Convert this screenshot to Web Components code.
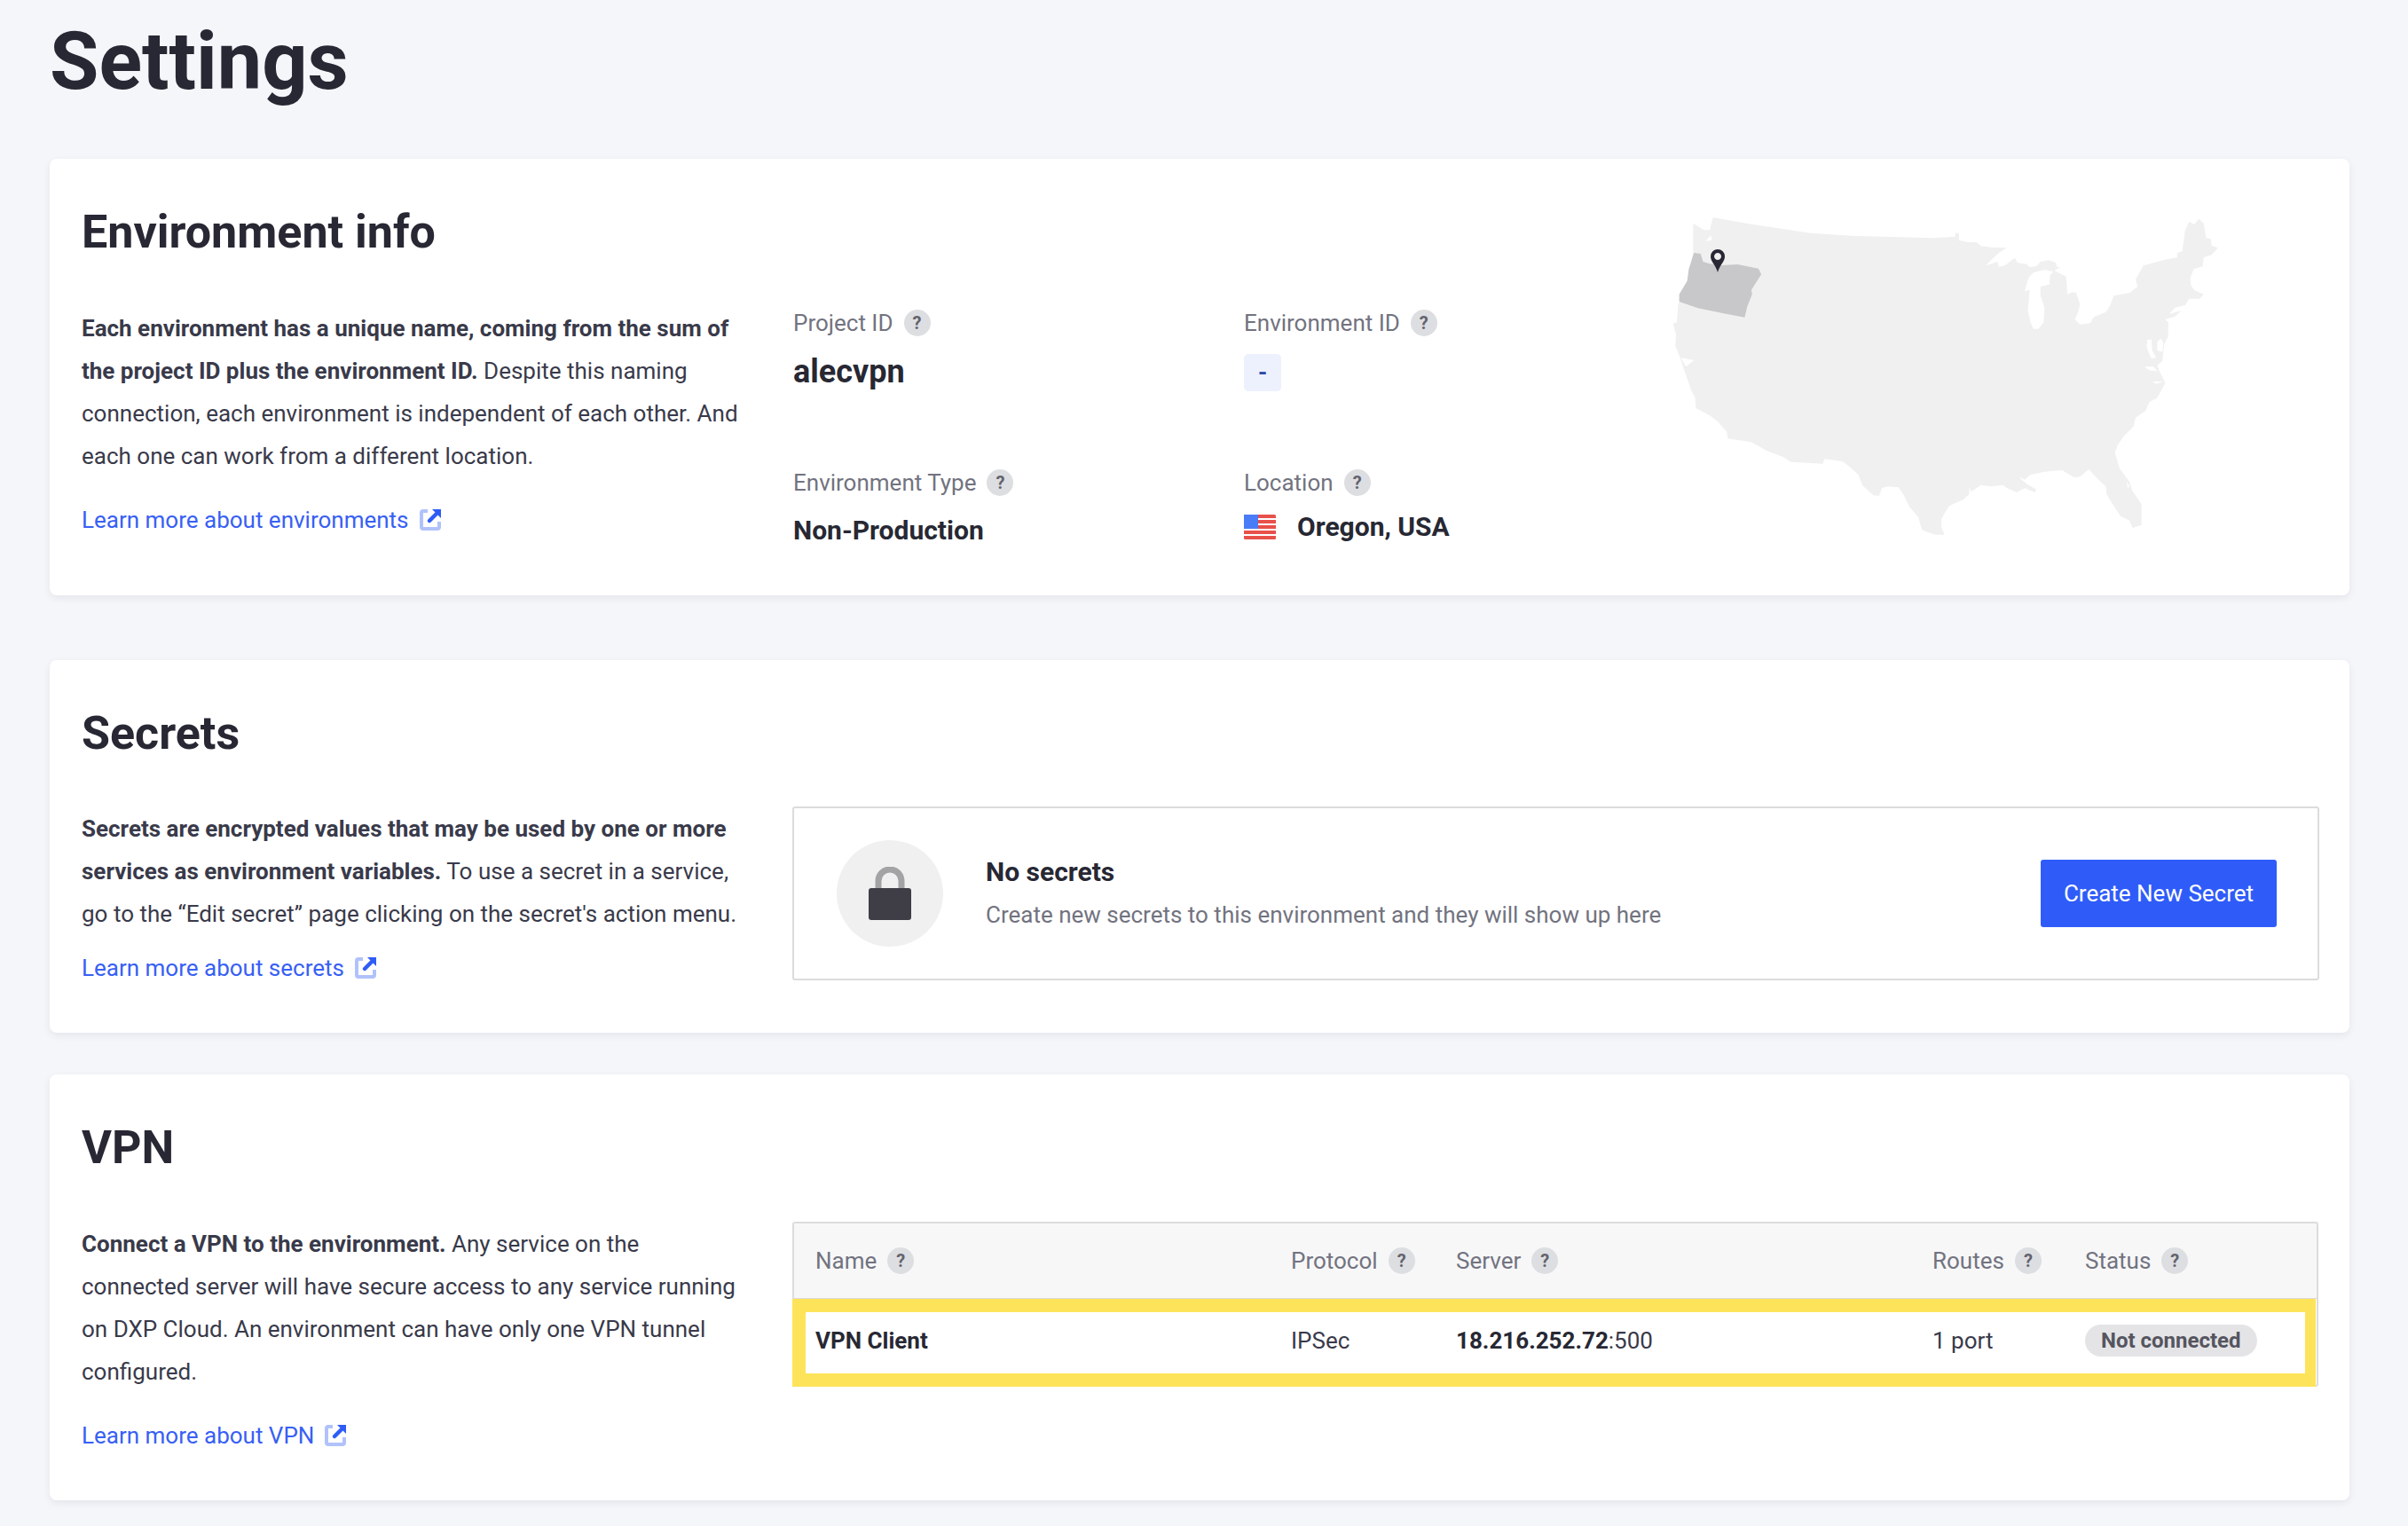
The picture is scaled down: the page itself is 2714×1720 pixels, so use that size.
<!DOCTYPE html>
<html lang="en">
<head>
  <meta charset="UTF-8">
  <title>Settings</title>
  <style>
    html, body { margin:0; background:#f5f6fa; }
    body {
      font-family:Roboto, "Liberation Sans", sans-serif;
      color:#272833;
    }
    main { display:block; padding:19px 66px 31px 56px; }
    h1 { margin:0 0 60px; font-size:90px; line-height:102px; font-weight:700; height:100px; }
    settings-card { margin-bottom:47px; }
    #env { margin-bottom:73px; }
    #vpn { margin-bottom:0; }
  </style>
</head>
<body>
  <template id="card-tmpl">
    <style>
      :host { display:flex; background:#fff; border-radius:8px; box-shadow:0 3px 8px rgba(39,40,51,.08); padding:53px 34px 49px 36px; }
      .main { flex:1; min-width:0; }
      h2 { margin:0 0 54px; font-size:52px; line-height:60px; font-weight:700; color:#272833; }
      .body { display:grid; grid-template-columns:801px 1fr; }
      .text { width:745px; font-size:26px; line-height:48px; color:#393a4a; }
    </style>
    <div class="main">
      <h2 id="title"></h2>
      <div class="body">
        <div class="text"><slot name="text"></slot></div>
        <div><slot name="content"></slot></div>
      </div>
    </div>
    <slot name="aside"></slot>
  </template>

  <template id="link-tmpl">
    <style>
      :host { display:block; margin-top:24px; font-size:26px; line-height:48px; }
      a { display:inline-flex; align-items:center; gap:12px; color:#3860f4; text-decoration:none; }
      svg { width:24px; height:24px; display:block; }
    </style>
    <a href="#"><span><slot></slot></span>
      <svg viewBox="0 0 24 24"><path d="M9 2H4a2 2 0 0 0-2 2v16a2 2 0 0 0 2 2h16a2 2 0 0 0 2-2v-6" fill="none" stroke="#b1c2fb" stroke-width="4"/><path d="M14 0h10v10z" fill="#2f5cf5"/><path d="M20 4 11 13" stroke="#2f5cf5" stroke-width="4.5" stroke-linecap="round"/></svg>
    </a>
  </template>

  <template id="help-tmpl">
    <style>
      :host { display:inline-flex; align-items:center; justify-content:center; width:30px; height:30px; border-radius:50%; background:#dddee1; color:#62636f; font:700 20px/1 Roboto, sans-serif; flex:none; }
    </style>
    ?
  </template>

  <template id="label-tmpl">
    <style>
      :host { display:inline-flex; align-items:center; gap:12px; font-size:26px; line-height:36px; color:#72737f; }
    </style>
    <slot></slot><help-dot></help-dot>
  </template>

  <template id="meta-tmpl">
    <style>
      :host { display:grid; grid-template-columns:509px 509px; grid-template-rows:180px auto; }
    </style>
    <slot></slot>
  </template>

  <template id="item-tmpl">
    <style>
      :host { display:block; }
      .value { margin-top:18px; color:#272833; font-weight:700; font-size:30px; line-height:36px; }
    </style>
    <info-label id="lbl"></info-label>
    <div class="value"><slot></slot></div>
  </template>

  <template id="map-tmpl">
    <style>
      :host { display:block; flex:none; width:700px; height:422px; margin:-32px 74px 0 0; }
      svg { display:block; width:700px; height:422px; }
    </style>
    <svg viewBox="0 0 700 422">
      <g transform="scale(.4464 .3333)">
        <path fill="#f0f0f0" d="M203 135 300 158 450 188 560 198 660 201 760 205 815 200 815 188 824 188 824 212 845 218 870 220 880 232 910 237 945 238 925 255 905 280 893 298 910 290 922 285 925 302 940 298 965 272 972 288 995 293 1003 303 1020 300 1030 285 1050 280 1068 287 1072 303 1080 303 1065 315 1095 335 1098 395 1110 388 1120 390 1130 430 1125 455 1117 480 1130 497 1155 493 1165 472 1195 455 1205 435 1215 400 1255 390 1275 370 1270 345 1290 298 1340 280 1375 270 1375 255 1388 250 1395 180 1405 150 1418 158 1430 140 1442 155 1448 205 1460 208 1462 230 1478 238 1462 262 1442 270 1440 300 1417 310 1408 340 1410 365 1418 380 1442 395 1432 410 1405 410 1395 432 1370 440 1355 462 1385 450 1370 470 1345 480 1353 490 1352 540 1342 565 1338 620 1325 635 1330 655 1340 680 1345 695 1335 720 1325 745 1305 760 1295 790 1270 812 1265 842 1240 875 1225 905 1218 930 1230 985 1255 1030 1262 1060 1285 1105 1285 1175 1262 1185 1255 1160 1232 1145 1205 1090 1197 1070 1195 1045 1175 1020 1152 987 1130 1012 1115 1015 1085 990 1060 992 1040 995 1005 1005 990 1022 975 1010 985 1025 1000 1040 1020 1055 1015 1065 990 1050 970 1065 945 1050 935 1040 905 1045 880 1040 855 1062 850 1048 850 1070 835 1090 800 1110 790 1130 780 1155 780 1185 788 1208 765 1208 745 1200 730 1190 722 1150 700 1115 685 1075 672 1048 645 1045 630 1050 622 1077 608 1075 580 1040 570 1005 545 975 530 960 485 952 480 968 400 962 380 945 340 925 300 895 240 883 238 860 215 825 195 805 160 780 158 745 148 720 138 680 130 650 120 610 108 570 110 530 102 495 112 490 115 430 118 420 118 395 138 350 150 280 153 255 153 205 153 155 165 165 180 178 195 178Z"/>
        <path fill="#fff" d="M1012 322 1040 312 1062 318 1055 330 1052 362 1030 370 1030 400 1040 440 1038 490 1025 512 1012 512 1005 490 998 450 1003 380 990 385 1000 340Z"/>
        <path fill="#fff" d="M1300 548 1310 548 1312 585 1322 610 1310 612 1298 575ZM1335 545 1340 560 1338 590 1325 585 1325 555ZM1292 640 1315 640 1325 655 1305 652ZM1312 690 1340 690 1322 698ZM185 215 198 195 200 212ZM122 610 155 618 135 640ZM1248 1030 1255 1045 1250 1050Z"/>
        <path fill="#c8c8ca" d="M155 255 172 258 178 285 195 292 225 297 265 294 318 308 325 328 300 380 302 395 290 435 283 473 230 460 165 442 118 420 118 395 138 350 142 310Z"/>
      </g>
      <path fill="#272833" fill-rule="evenodd" d="M96 107C94 99 88 95 88 89a8 8 0 0 1 16 0C104 95 98 99 96 107ZM96 85a4 4 0 1 0 .01 0Z"/>
    </svg>
  </template>

  <template id="empty-tmpl">
    <style>
      :host { display:flex; align-items:center; box-sizing:border-box; height:196px; margin-top:-2px; border:2px solid #dcdcdc; border-radius:3px; padding:0 46px 0 48px; gap:48px; }
      .circle { flex:none; width:120px; height:120px; border-radius:50%; background:#f0f0f0; display:flex; align-items:center; justify-content:center; }
      .txt { flex:1; margin-top:-1px; font-size:26px; line-height:48px; color:#72737f; }
      .txt b { display:block; color:#272833; font-size:30px; font-weight:700; }
      button { flex:none; width:266px; height:76px; border:0; border-radius:3px; background:#2f5cf9; color:#fff; font:400 26px Roboto, sans-serif; }
      svg { display:block; }
    </style>
    <div class="circle">
      <svg width="48" height="60" viewBox="0 0 48 60"><path d="M11 26V16a13 13 0 0 1 26 0v10" fill="none" stroke="#a3a3a5" stroke-width="7"/><rect y="24" width="48" height="36" rx="3" fill="#3f3e47"/></svg>
    </div>
    <div class="txt"><b><slot name="title"></slot></b><slot name="sub"></slot></div>
    <button><slot name="action"></slot></button>
  </template>

  <template id="table-tmpl">
    <style>
      :host { display:block; box-sizing:border-box; margin-top:-1px; margin-right:1px; border:2px solid #dcdcdc; border-radius:3px; }
      .row { display:grid; grid-template-columns:536px 186px 537px 172px 1fr; padding-left:24px; align-items:center; }
      .head { height:84px; background:#f7f7f8; border-bottom:1px solid #dcdcdc; }
      .data { position:relative; box-sizing:border-box; height:97px; padding-bottom:4px; font-size:26px; color:#393a4a; }
      .mark { position:absolute; left:-2px; top:0; right:1px; height:99px; box-sizing:border-box; border:solid #fde35a; border-width:15px 12px 15px 15px; pointer-events:none; }
      b { color:#272833; font-weight:700; }
      .pill { display:inline-block; height:36px; line-height:36px; padding:0 18px; border-radius:18px; background:#e4e4e7; color:#55555f; font-size:24px; font-weight:700; vertical-align:middle; }
    </style>
    <div class="row head">
      <info-label>Name</info-label>
      <info-label>Protocol</info-label>
      <info-label>Server</info-label>
      <info-label>Routes</info-label>
      <info-label>Status</info-label>
    </div>
    <div class="row data">
      <div><b><slot name="name"></slot></b></div>
      <div><slot name="protocol"></slot></div>
      <div><b><slot name="host"></slot></b><slot name="port"></slot></div>
      <div><slot name="routes"></slot></div>
      <div><span class="pill"><slot name="status"></slot></span></div>
      <div class="mark"></div>
    </div>
  </template>

  <main>
    <h1>Settings</h1>

    <settings-card id="env" heading="Environment info">
      <div slot="text"><b>Each environment has a unique name, coming from the sum of the project ID plus the environment ID.</b> Despite this naming connection, each environment is independent of each other. And each one can work from a different location.<learn-link>Learn more about environments</learn-link></div>
      <meta-grid slot="content">
        <meta-item label="Project ID" style="padding-left:1px"><span style="display:block;font-size:36px;padding-top:1px">alecvpn</span></meta-item>
        <meta-item label="Environment ID"><span style="display:flex;align-items:center;justify-content:center;width:42px;height:42px;margin-top:-1px;border-radius:5px;background:#edf0fd;color:#2e4aa8;font-size:26px;line-height:42px">-</span></meta-item>
        <meta-item label="Environment Type" style="padding-left:1px">Non-Production</meta-item>
        <meta-item label="Location"><span style="display:flex;align-items:center;gap:24px;margin-top:-4px">
          <svg width="36" height="28" viewBox="0 0 36 28"><rect width="36" height="28" rx="1.5" fill="#e8504a"/><path d="M0 5h36M0 11h36M0 17h36M0 23h36" stroke="#fff" stroke-width="2"/><rect width="16" height="16" fill="#4a7cf8"/></svg>
          Oregon, USA</span></meta-item>
      </meta-grid>
      <us-map slot="aside"></us-map>
    </settings-card>

    <settings-card heading="Secrets">
      <div slot="text" style="margin-top:-1px"><b>Secrets are encrypted values that may be used by one or more services as environment variables.</b> To use a secret in a service, go to the “Edit secret” page clicking on the secret's action menu.<learn-link style="margin-top:13px">Learn more about secrets</learn-link></div>
      <empty-state slot="content">
        <span slot="title">No secrets</span>
        <span slot="sub">Create new secrets to this environment and they will show up here</span>
        <span slot="action">Create New Secret</span>
      </empty-state>
    </settings-card>

    <settings-card id="vpn" heading="VPN">
      <div slot="text"><b>Connect a VPN to the environment.</b> Any service on the connected server will have secure access to any service running on DXP Cloud. An environment can have only one VPN tunnel configured.<learn-link>Learn more about VPN</learn-link></div>
      <vpn-table slot="content">
        <span slot="name">VPN Client</span>
        <span slot="protocol">IPSec</span>
        <span slot="host">18.216.252.72</span><span slot="port">:500</span>
        <span slot="routes">1 port</span>
        <span slot="status">Not connected</span>
      </vpn-table>
    </settings-card>
  </main>

  <script>
    // every element just clones its template into an open shadow root
    function simple(tag, id, after) {
      customElements.define(tag, class extends HTMLElement {
        constructor() {
          super();
          const clon = document.getElementById(id).content.cloneNode(true);
          this.attachShadow({ mode: 'open' }).appendChild(clon);
        }
        connectedCallback() {
          if (after) after(this);
        }
      });
    }
    simple('help-dot', 'help-tmpl');
    simple('info-label', 'label-tmpl');
    simple('learn-link', 'link-tmpl');
    simple('meta-grid', 'meta-tmpl');
    simple('meta-item', 'item-tmpl', el => {
      el.shadowRoot.getElementById('lbl').textContent = el.getAttribute('label');
    });
    simple('us-map', 'map-tmpl');
    simple('empty-state', 'empty-tmpl');
    simple('vpn-table', 'table-tmpl');
    simple('settings-card', 'card-tmpl', el => {
      el.shadowRoot.getElementById('title').textContent = el.getAttribute('heading');
    });
  </script>
</body>
</html>
